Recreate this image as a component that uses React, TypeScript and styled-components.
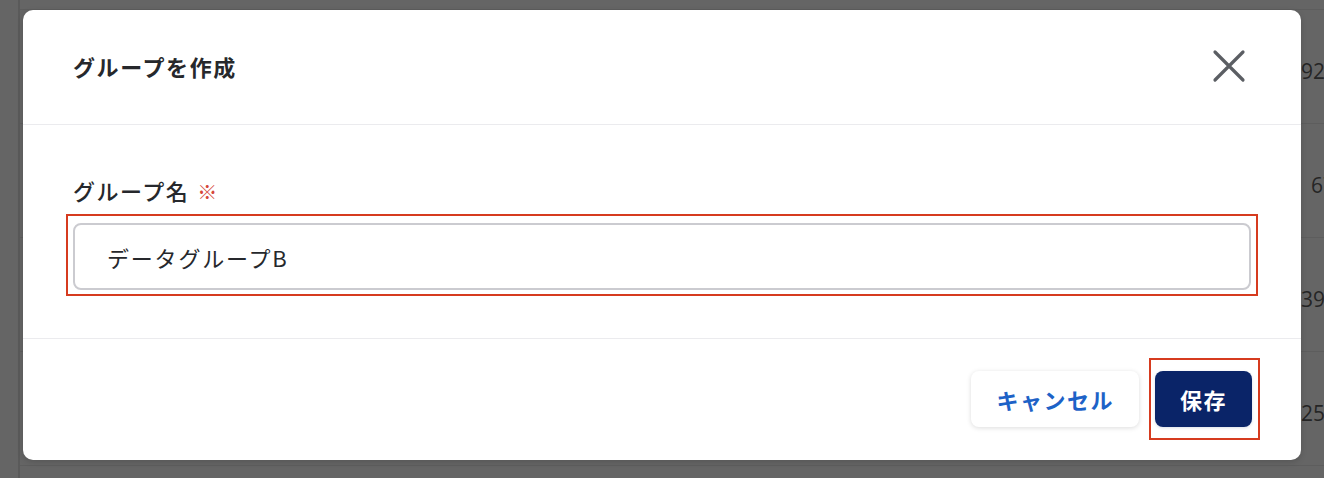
import React from "react";
import styled, { createGlobalStyle } from "styled-components";

const GlobalStyle = createGlobalStyle`
  * { box-sizing: border-box; }
  html, body { margin: 0; padding: 0; }
  body {
    font-family: "Noto Sans CJK JP", "Noto Sans", sans-serif;
    background: #656565;
  }
`;

const rows = [
  { value: "", height: 10, indent: 0 },
  { value: "92.4", height: 114, indent: 0 },
  { value: "67.1", height: 114, indent: 10 },
  { value: "39.8", height: 114, indent: 0 },
  { value: "25.3", height: 114, indent: 0 },
];

const App = () => {
  return (
    <>
      <GlobalStyle />
      <Page>
        <Table>
          {rows.map((r, i) => (
            <Row key={i} $height={r.height}>
              <Cell $indent={r.indent}>{r.value}</Cell>
            </Row>
          ))}
        </Table>
        <Dialog role="dialog">
          <Header>
            <Title>グループを作成</Title>
            <CloseButton aria-label="close">
              <svg width="34" height="34" viewBox="0 0 34 34">
                <path
                  d="M3 3 L31 31 M31 3 L3 31"
                  stroke="#5b5e63"
                  strokeWidth="3.2"
                  strokeLinecap="round"
                  fill="none"
                />
              </svg>
            </CloseButton>
          </Header>
          <Body>
            <Label>
              グループ名<Required>※</Required>
            </Label>
            <Field>
              <Input defaultValue="データグループB" />
            </Field>
          </Body>
          <Footer>
            <Button>キャンセル</Button>
            <Marked>
              <Button $primary>保存</Button>
            </Marked>
          </Footer>
        </Dialog>
      </Page>
    </>
  );
};

const Page = styled.div`
  position: relative;
  width: 1324px;
  height: 478px;
  overflow: hidden;
  background: #656565;
`;

const Table = styled.div`
  display: flex;
  flex-direction: column;
  height: 100%;
  border-left: 2px solid #5a5a5a;
  margin-left: 18px;
`;

const Row = styled.div<{ $height: number }>`
  flex: 0 0 ${(p) => p.$height}px;
  display: flex;
  align-items: center;
  border-bottom: 1px solid #5d5d5d;
`;

const Cell = styled.div<{ $indent: number }>`
  padding-left: ${(p) => 1281 + p.$indent}px;
  padding-top: 8px;
  font-family: "Open Sans", "Noto Sans", sans-serif;
  font-size: 21px;
  color: #252525;
  white-space: nowrap;
`;

const Dialog = styled.div`
  position: absolute;
  left: 23px;
  top: 10px;
  width: 1278px;
  height: 450px;
  background: #fff;
  border-radius: 10px;
  box-shadow: 0 2px 6px rgba(0, 0, 0, 0.15);
  display: flex;
  flex-direction: column;
`;

const Header = styled.div`
  height: 115px;
  display: flex;
  align-items: center;
  justify-content: space-between;
  padding: 0 50px 2px 50px;
  border-bottom: 1px solid #ebebee;
`;

const Title = styled.h2`
  margin: 0;
  font-size: 22px;
  font-weight: 700;
  letter-spacing: 1.6px;
  color: #26282c;
`;

const CloseButton = styled.button`
  border: none;
  background: none;
  padding: 0;
  width: 44px;
  height: 44px;
  display: flex;
  align-items: center;
  justify-content: center;
  cursor: pointer;
`;

const Body = styled.div`
  height: 214px;
  padding: 48px 50px 0;
  border-bottom: 1px solid #ebebee;
`;

const Label = styled.div`
  font-size: 22px;
  line-height: 34px;
  font-weight: 500;
  letter-spacing: 1.5px;
  color: #26282c;
  margin-bottom: 14px;
`;

const Required = styled.span`
  color: #d5473a;
  font-size: 20px;
  margin-left: 8px;
`;

const Field = styled.div`
  position: relative;

  &::after {
    content: "";
    position: absolute;
    left: -7px;
    right: -7px;
    top: -9px;
    bottom: -6px;
    border: 2px solid #d63b1f;
    pointer-events: none;
  }
`;

const Input = styled.input`
  display: block;
  width: 100%;
  height: 67px;
  padding: 0 32px;
  border: 2px solid #cbcbd0;
  border-radius: 8px;
  font-family: "Noto Sans CJK JP", "Noto Sans", sans-serif;
  font-size: 22px;
  letter-spacing: 1.8px;
  color: #26282c;
  outline: none;
`;

const Footer = styled.div`
  flex: 1;
  display: flex;
  align-items: center;
  justify-content: flex-end;
  gap: 16px;
  padding: 0 49px 2px 0;
`;

const Marked = styled.div`
  position: relative;

  &::after {
    content: "";
    position: absolute;
    left: -6px;
    right: -8px;
    top: -13px;
    bottom: -13px;
    border: 2px solid #d63b1f;
    pointer-events: none;
  }
`;

const Button = styled.button<{ $primary?: boolean }>`
  height: 56px;
  padding: 0 25px;
  border: none;
  border-radius: 8px;
  font-family: "Noto Sans CJK JP", "Noto Sans", sans-serif;
  font-size: 22px;
  font-weight: 700;
  letter-spacing: 1.5px;
  cursor: pointer;
  background: ${(p) => (p.$primary ? "#0a2468" : "#fff")};
  color: ${(p) => (p.$primary ? "#fff" : "#1d62c7")};
  box-shadow: ${(p) =>
    p.$primary ? "0 1px 3px rgba(10, 36, 104, 0.15)" : "0 1px 5px rgba(0, 0, 0, 0.14)"};
`;

export default App;
